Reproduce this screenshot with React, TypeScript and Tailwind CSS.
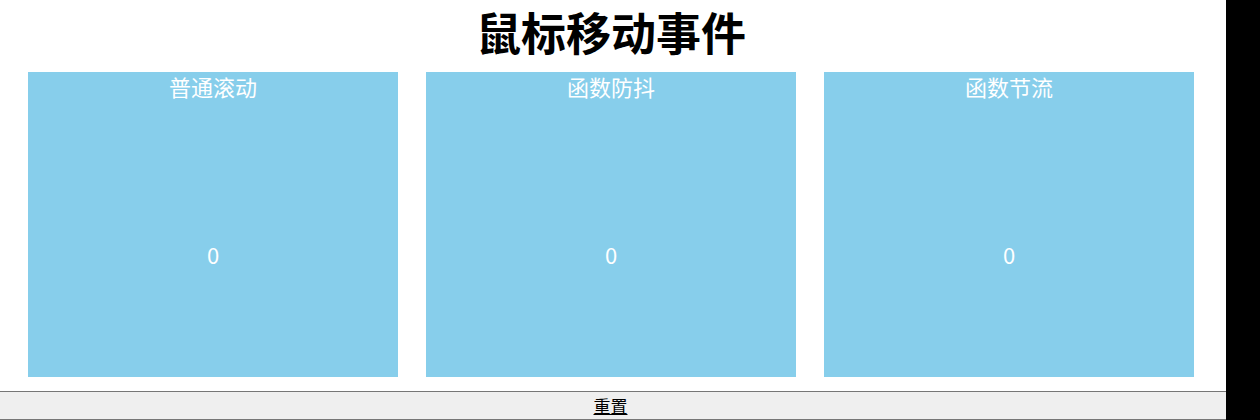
import React, { useState } from 'react';

const boxes = ['普通滚动', '函数防抖', '函数节流'];

export default function App() {
  const [counts, setCounts] = useState([0, 0, 0]);

  return (
    <div className="flex h-[420px] w-[1260px] overflow-hidden bg-black" style={{ fontFamily: '"Noto Sans CJK SC", "Noto Sans", sans-serif' }}>
      <div className="flex w-[1226px] flex-col bg-white">
        {/* 标题 */}
        <h1 className="h-[72px] pb-[8px] pr-[4px] text-center text-[45px] font-bold leading-[64px] text-black">鼠标移动事件</h1>

        {/* 三个区域 */}
        <div className="flex gap-[28px] pl-[28px]">
          {boxes.map((name, i) => (
            <div key={name} className="flex h-[305px] w-[370px] flex-col bg-[#87ceeb] text-white">
              <div className="h-[30px] text-center text-[22px] leading-[28px]">{name}</div>
              <div className="flex flex-1 items-center justify-center pt-[29px] text-[22px]">{counts[i]}</div>
            </div>
          ))}
        </div>

        {/* 重置按钮 */}
        <button
          onClick={() => setCounts([0, 0, 0])}
          className="mt-[14px] h-[29px] w-full border-y border-[#767676] bg-[#efefef] pr-[5px] text-[17px] leading-[26px] text-black underline"
        >
          重置
        </button>
      </div>
      <div className="flex-1 bg-black" />
    </div>
  );
}
